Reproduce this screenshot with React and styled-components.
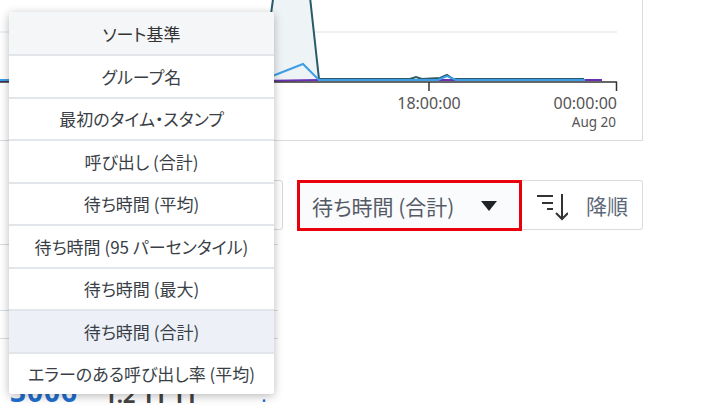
import React from 'react'
import styled, { createGlobalStyle } from 'styled-components'

const GlobalStyle = createGlobalStyle`
  body {
    margin: 0;
    background: #fff;
    font-family: "Noto Sans CJK JP", "Noto Sans", sans-serif;
  }
`

const sortOptions = [
  'グループ名',
  '最初のタイム・スタンプ',
  '呼び出し (合計)',
  '待ち時間 (平均)',
  '待ち時間 (95 パーセンタイル)',
  '待ち時間 (最大)',
  '待ち時間 (合計)',
  'エラーのある呼び出し率 (平均)',
]

export default function App() {
  const selected = '待ち時間 (合計)'
  return (
    <Page>
      <GlobalStyle />
      <ChartCard>
        <LatencyChart />
      </ChartCard>

      <Toolbar>
        <PlainSelect />
        <HighlightSelect>
          <SelectLabel>{selected}</SelectLabel>
          <Caret />
        </HighlightSelect>
        <SortButton>
          <SortIcon />
          <SortLabel>降順</SortLabel>
        </SortButton>
      </Toolbar>

      <GroupList>
        <GroupRow $height={13} />
        <GroupRow $height={65} />
        <GroupRow $height={27} />
        <PeekRow>
          <LinkText>3006</LinkText>
          <ValueText>1.2 11 11</ValueText>
          <Tiny>.</Tiny>
        </PeekRow>
      </GroupList>

      <Menu>
        <MenuHeader>ソート基準</MenuHeader>
        {sortOptions.map((opt) => (
          <MenuItem key={opt} $active={opt === selected}>
            {opt}
          </MenuItem>
        ))}
      </Menu>
    </Page>
  )
}

function LatencyChart() {
  return (
    <svg width="642" height="140" viewBox="0 0 642 140">
      <line x1="0" y1="32" x2="617" y2="32" stroke="#e7eaed" strokeWidth="1.5" />
      {/* peak fill */}
      <polygon
        points="262,80 277,-30 307,-30 319,80"
        fill="#eef3f6"
      />
      {/* purple series */}
      <polyline
        points="0,81 260,81 319,80 602,80"
        fill="none"
        stroke="#6a2fb6"
        strokeWidth="2"
      />
      {/* dark series */}
      <polyline
        points="0,80 262,80 277,-30 307,-30 319,79 410,79 416,77 422,79 440,78 447,75 453,79 584,79"
        fill="none"
        stroke="#285a68"
        strokeWidth="2"
      />
      {/* blue series */}
      <polyline
        points="0,80 262,79 275,75 303,64 319,80 438,80 447,76 456,80 585,80"
        fill="none"
        stroke="#3d9ee6"
        strokeWidth="2"
      />
      <line x1="0" y1="82" x2="617" y2="82" stroke="#333" strokeWidth="1.5" />
      <line x1="429" y1="82" x2="429" y2="91" stroke="#333" strokeWidth="1.5" />
      <line x1="616.5" y1="82" x2="616.5" y2="91" stroke="#333" strokeWidth="1.5" />
      <AxisText x="429" y="109" textAnchor="middle">18:00:00</AxisText>
      <AxisText x="617" y="109" textAnchor="end">00:00:00</AxisText>
      <AxisSub x="616" y="127" textAnchor="end">Aug 20</AxisSub>
    </svg>
  )
}

function SortIcon() {
  return (
    <svg width="32" height="30" viewBox="0 0 32 30" fill="none" stroke="#333" strokeWidth="2">
      <line x1="1" y1="4" x2="17" y2="4" />
      <line x1="6" y1="11" x2="17" y2="11" />
      <line x1="11" y1="17" x2="17" y2="17" />
      <line x1="26" y1="2" x2="26" y2="27" />
      <polyline points="20,21 26,27 32,21" />
    </svg>
  )
}

const Page = styled.div`
  position: relative;
  width: 728px;
  height: 414px;
  overflow: hidden;
  background: #fff;
`

const ChartCard = styled.div`
  width: 642px;
  height: 140px;
  border-right: 1px solid #d9dcdf;
  border-bottom: 1px solid #d9dcdf;
  background: #fff;

  svg {
    display: block;
  }
`

const AxisText = styled.text`
  font-family: "Noto Sans", "Open Sans", sans-serif;
  font-size: 16px;
  fill: #555;
`

const AxisSub = styled.text`
  font-family: "Noto Sans", "Open Sans", sans-serif;
  font-size: 13.5px;
  fill: #555;
`

const Toolbar = styled.div`
  display: flex;
  align-items: flex-start;
  width: 643px;
  margin-top: 39px;
  height: 51px;
`

const PlainSelect = styled.div`
  box-sizing: border-box;
  width: 263px;
  height: 50px;
  margin-left: 20px;
  margin-right: 14px;
  border: 1px solid #d6dade;
  border-radius: 3px;
  background: #fff;
`

const HighlightSelect = styled.div`
  box-sizing: border-box;
  width: 225px;
  height: 51px;
  display: flex;
  align-items: center;
  justify-content: space-between;
  padding: 0 22px 0 12px;
  border: 3px solid #e8000b;
  background: #fafbfc;
`

const SelectLabel = styled.span`
  font-size: 21px;
  color: #555b66;
  font-feature-settings: "palt";
  white-space: nowrap;
`

const Caret = styled.span`
  width: 0;
  height: 0;
  border-left: 8.5px solid transparent;
  border-right: 8.5px solid transparent;
  border-top: 10px solid #1f2328;
`

const SortButton = styled.div`
  box-sizing: border-box;
  width: 121px;
  height: 50px;
  display: flex;
  align-items: center;
  justify-content: space-between;
  padding: 0 14px 0 14px;
  border: 1px solid #d8dce0;
  border-left: none;
  border-radius: 0 3px 3px 0;
  background: #fff;

  svg {
    margin-top: 4px;
  }
`

const SortLabel = styled.span`
  font-size: 21px;
  color: #5d6878;
`

const GroupList = styled.div`
  width: 278px;
`

const GroupRow = styled.div`
  height: ${(p) => p.$height}px;
  border-bottom: 1px solid #d9dcdf;
`

const PeekRow = styled.div`
  height: 66px;
  display: flex;
  align-items: flex-end;
  padding-left: 10px;
  white-space: nowrap;
`

const LinkText = styled.span`
  font-family: "Noto Sans", sans-serif;
  font-size: 28px;
  font-weight: 700;
  line-height: 1;
  color: #1f6fd0;
  letter-spacing: 1px;
`

const ValueText = styled.span`
  font-family: "Noto Sans", sans-serif;
  font-size: 22px;
  font-weight: 700;
  line-height: 1;
  color: #444;
  margin-left: 26px;
`

const Tiny = styled.span`
  font-family: "Noto Sans", sans-serif;
  font-size: 20px;
  line-height: 1;
  color: #1f6fd0;
  margin-left: 64px;
`

const Menu = styled.div`
  position: absolute;
  left: 9px;
  top: 12px;
  width: 265px;
  background: #fff;
  border-radius: 3px;
  box-shadow: 0 2px 10px rgba(0, 0, 0, 0.28);
  overflow: hidden;
`

const MenuHeader = styled.div`
  height: 42px;
  display: flex;
  align-items: center;
  justify-content: center;
  background: #f4f6f8;
  font-size: 17px;
  color: #333;
  font-feature-settings: "palt";
`

const MenuItem = styled.div`
  box-sizing: border-box;
  height: 42.5px;
  display: flex;
  align-items: center;
  justify-content: center;
  border-top: 2px solid #e2e5e9;
  background: ${(p) => (p.$active ? '#edf1f7' : '#fff')};
  font-size: 17px;
  color: #3a3f47;
  font-feature-settings: "palt";
  white-space: nowrap;
`
